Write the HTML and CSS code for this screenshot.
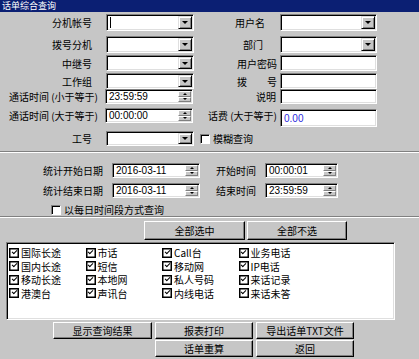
FILE: index.html
```html
<!DOCTYPE html>
<html lang="zh-CN">
<head>
    <meta charset="UTF-8">
    <meta name="viewport" content="width=device-width, initial-scale=1.0">
    <title>话单综合查询</title>
    <link rel="stylesheet" href="styles.css">
</head>
<body>
    <div id="dialog">
        <div class="title-bar"><span>话单综合查询</span></div>

        <!-- 查询条件 -->
        <div class="query-form">
            <div class="row r1">
                <div class="lbl c1">分机帐号</div>
                <div class="c2"><div class="combo"><span class="caret"></span><span class="drop-btn"></span></div></div>
                <div class="lbl c3 pr14">用户名</div>
                <div class="c4"><div class="combo"><span class="drop-btn"></span></div></div>
            </div>
            <div class="row r2">
                <div class="lbl c1">拨号分机</div>
                <div class="c2"><div class="combo"><span class="drop-btn"></span></div></div>
                <div class="lbl c3 pr16">部门</div>
                <div class="c4"><div class="combo"><span class="drop-btn"></span></div></div>
            </div>
            <div class="row r3">
                <div class="lbl c1">中继号</div>
                <div class="c2"><div class="combo"><span class="drop-btn"></span></div></div>
                <div class="lbl c3 pr2">用户密码</div>
                <div class="c4"><div class="field"></div></div>
            </div>
            <div class="row r4">
                <div class="lbl c1">工作组</div>
                <div class="c2"><div class="combo"><span class="drop-btn"></span></div></div>
                <div class="lbl c3 pr2">拨　　号</div>
                <div class="c4"><div class="field"></div></div>
            </div>
            <div class="row r5">
                <div class="lbl c1 pr6">通话时间 (小于等于)</div>
                <div class="c2 shift"><div class="spin-field"><span class="val">23:59:59</span><span class="spin"><i class="up"></i><i class="down"></i></span></div></div>
                <div class="lbl c3 pr3">说明</div>
                <div class="c4"><div class="field"></div></div>
            </div>
            <div class="row r6">
                <div class="lbl c1 pr6">通话时间 (大于等于)</div>
                <div class="c2 shift"><div class="spin-field"><span class="val">00:00:00</span><span class="spin"><i class="up"></i><i class="down"></i></span></div></div>
                <div class="lbl c3 pr2">话费 (大于等于)</div>
                <div class="c4"><div class="field fee"><span class="val blue">0.00</span></div></div>
            </div>
            <div class="row r7">
                <div class="lbl c1">工号</div>
                <div class="c2"><div class="combo"><span class="drop-btn"></span></div></div>
                <div class="c3 check-cell"><span class="chk3d"></span>模糊查询</div>
            </div>
        </div>

        <div class="sep"></div>

        <!-- 统计日期 -->
        <div class="stats">
            <div class="row s1">
                <div class="lbl sc1">统计开始日期</div>
                <div class="spin-field date"><span class="val">2016-03-11</span><span class="spin"><i class="up"></i><i class="down"></i></span></div>
                <div class="lbl-left sc3">开始时间</div>
                <div class="spin-field time"><span class="val">00:00:01</span><span class="spin"><i class="up"></i><i class="down"></i></span></div>
            </div>
            <div class="row s2">
                <div class="lbl sc1">统计结束日期</div>
                <div class="spin-field date"><span class="val">2016-03-11</span><span class="spin"><i class="up"></i><i class="down"></i></span></div>
                <div class="lbl-left sc3">结束时间</div>
                <div class="spin-field time"><span class="val">23:59:59</span><span class="spin"><i class="up"></i><i class="down"></i></span></div>
            </div>
            <div class="daily"><span class="chk3d"></span>以每日时间段方式查询</div>
        </div>

        <div class="sep"></div>

        <div class="select-buttons">
            <button class="win-btn">全部选中</button>
            <button class="win-btn">全部不选</button>
        </div>

        <!-- 话单类型 -->
        <div class="type-list">
            <div class="item"><span class="tick"></span>国际长途</div>
            <div class="item"><span class="tick"></span>市话</div>
            <div class="item"><span class="tick"></span>Call台</div>
            <div class="item"><span class="tick"></span>业务电话</div>
            <div class="item"><span class="tick"></span>国内长途</div>
            <div class="item"><span class="tick"></span>短信</div>
            <div class="item"><span class="tick"></span>移动网</div>
            <div class="item"><span class="tick"></span>IP电话</div>
            <div class="item"><span class="tick"></span>移动长途</div>
            <div class="item"><span class="tick"></span>本地网</div>
            <div class="item"><span class="tick"></span>私人号码</div>
            <div class="item"><span class="tick"></span>来话记录</div>
            <div class="item"><span class="tick"></span>港澳台</div>
            <div class="item"><span class="tick"></span>声讯台</div>
            <div class="item"><span class="tick"></span>内线电话</div>
            <div class="item"><span class="tick"></span>来话未答</div>
        </div>

        <div class="actions">
            <button class="win-btn">显示查询结果</button>
            <button class="win-btn">报表打印</button>
            <button class="win-btn">导出话单TXT文件</button>
            <button class="win-btn col2">话单重算</button>
            <button class="win-btn">返回</button>
        </div>
    </div>
</body>
</html>
```

FILE: styles.css
```css
*, *::before, *::after {
    box-sizing: border-box;
}

body {
    margin: 0;
    background-color: #c6c6c6;
    font-family: "Noto Sans CJK SC", sans-serif;
    font-size: 10px;
    color: #000;
}

#dialog {
    width: 419px;
    height: 359px;
    overflow: hidden;
    background-color: #c6c6c6;
}

.title-bar {
    display: flex;
    align-items: center;
    height: 12px;
    padding-left: 2px;
    background-color: #0b1f73;
    color: #fff;
    font-size: 9px;
    white-space: nowrap;
}
.title-bar span {
    line-height: 12px;
}

/* 通用行 */
.row {
    display: flex;
}
.lbl {
    display: flex;
    align-items: center;
    justify-content: flex-end;
    white-space: nowrap;
}
.lbl-left {
    display: flex;
    align-items: center;
    white-space: nowrap;
}

/* 顶部表单 */
.query-form {
    padding-top: 2px;
}
.c1 { width: 104px; padding-right: 12px; }
.c2 { width: 91px; padding-left: 2px; }
.c2.shift { padding-left: 1px; }
.c3 { width: 84px; }
.c4 { width: 98px; padding-left: 1px; }
.pr2 { padding-right: 2px; }
.pr3 { padding-right: 3px; }
.pr6 { padding-right: 6px; }
.pr14 { padding-right: 14px; }
.pr16 { padding-right: 16px; }

.r1 { height: 17px; margin-bottom: 5px; }
.r2 { height: 17px; margin-bottom: 2px; }
.r3 { height: 16px; margin-bottom: 2px; }
.r4 { height: 16px; margin-bottom: 0; }
.r5 { height: 15px; margin-bottom: 4px; }
.r6 { height: 15px; margin-bottom: 8px; }
.r7 { height: 15px; margin-bottom: 5px; }

.c2 > *, .c4 > * {
    width: 88px;
    height: 100%;
}
.c4 > * {
    width: 97px;
}

.combo, .field, .spin-field {
    display: flex;
    align-items: stretch;
    padding: 1px;
    background-color: #fff;
    border: 1px solid;
    border-color: #808080 #fff #fff #808080;
    box-shadow: inset 1px 1px #000, inset -1px -1px #dfdfdf;
}
.field.fee {
    height: 18px;
    margin-top: 1px;
}

.caret {
    width: 1px;
    margin: 1px 0 1px 2px;
    background-color: #000;
}

.drop-btn {
    margin-left: auto;
    width: 14px;
    display: flex;
    align-items: center;
    justify-content: center;
    background-color: #c6c6c6;
    border: 1px solid;
    border-color: #dfdfdf #000 #000 #dfdfdf;
    box-shadow: inset 1px 1px #fff, inset -1px -1px #808080;
}
.drop-btn::before {
    content: "";
    border-top: 3px solid #000;
    border-left: 3px solid transparent;
    border-right: 3px solid transparent;
}

.val {
    font-family: "Liberation Sans", sans-serif;
    font-size: 10px;
    line-height: 11px;
    padding-left: 2px;
    display: flex;
    align-items: center;
}
.val.blue {
    color: #2a2ae0;
}

.spin {
    margin-left: auto;
    width: 13px;
    display: flex;
    flex-direction: column;
}
.spin i {
    flex: 1;
    display: flex;
    align-items: center;
    justify-content: center;
    background-color: #c6c6c6;
    border: 1px solid;
    border-color: #fff #808080 #808080 #fff;
}
.spin i::before {
    content: "";
    border-left: 2px solid transparent;
    border-right: 2px solid transparent;
}
.spin .up::before { border-bottom: 2px solid #000; }
.spin .down::before { border-top: 2px solid #000; }

.check-cell {
    display: flex;
    align-items: center;
    gap: 3px;
    padding-left: 5px;
    white-space: nowrap;
}

.chk3d {
    width: 10px;
    height: 10px;
    flex: none;
    background-color: #fff;
    border: 1px solid;
    border-color: #808080 #fff #fff #808080;
    box-shadow: inset 1px 1px #000;
}

.sep {
    height: 2px;
    border-top: 1px solid #808080;
    border-bottom: 1px solid #fff;
}

/* 统计日期 */
.stats {
    padding-top: 10px;
    height: 63px;
}
.s1 { height: 15px; margin-bottom: 5px; }
.s2 { height: 15px; margin-bottom: 6px; }
.sc1 { width: 112px; padding-right: 9px; }
.sc3 { width: 65px; padding-left: 16px; }
.spin-field.date { width: 88px; }
.spin-field.time { width: 73px; }
.daily {
    display: flex;
    align-items: center;
    gap: 3px;
    height: 11px;
    padding-left: 51px;
}

button.win-btn {
    padding: 0;
    margin: 0;
    font-family: "Noto Sans CJK SC", sans-serif;
    font-size: 10px;
    color: #000;
    background-color: #c6c6c6;
    border: 1px solid;
    border-color: #fff #000 #000 #fff;
    box-shadow: inset -1px -1px #808080;
    white-space: nowrap;
}

.select-buttons {
    display: grid;
    grid-template-columns: 101px 100px;
    column-gap: 2px;
    height: 19px;
    margin-top: 3px;
    padding-left: 144px;
}

/* 列表 */
.type-list {
    display: grid;
    grid-template-columns: repeat(4, 76.5px);
    grid-auto-rows: 13.5px;
    align-content: start;
    width: 389px;
    height: 78px;
    margin: 2px 0 0 6px;
    padding: 3px 0 0 2px;
    background-color: #fff;
    border: 1px solid;
    border-color: #808080 #fff #fff #808080;
    box-shadow: inset 1px 1px #000, inset -1px -1px #dfdfdf;
}
.item {
    display: flex;
    align-items: center;
    gap: 2px;
    white-space: nowrap;
}
.tick {
    position: relative;
    width: 10px;
    height: 10px;
    flex: none;
    border: 1px solid #000;
    box-shadow: inset 0 0 0 0.5px #000;
}
.tick::after {
    content: "";
    position: absolute;
    left: 1.5px;
    top: 1px;
    width: 5px;
    height: 3px;
    border-left: 1.6px solid #000;
    border-bottom: 1.6px solid #000;
    transform: rotate(-45deg);
}

.actions {
    display: grid;
    grid-template-columns: 99px 98px 98px;
    grid-auto-rows: 17px;
    column-gap: 3px;
    row-gap: 1px;
    margin-top: 2px;
    padding-left: 53px;
}
.actions .col2 {
    grid-column: 2;
}
```
